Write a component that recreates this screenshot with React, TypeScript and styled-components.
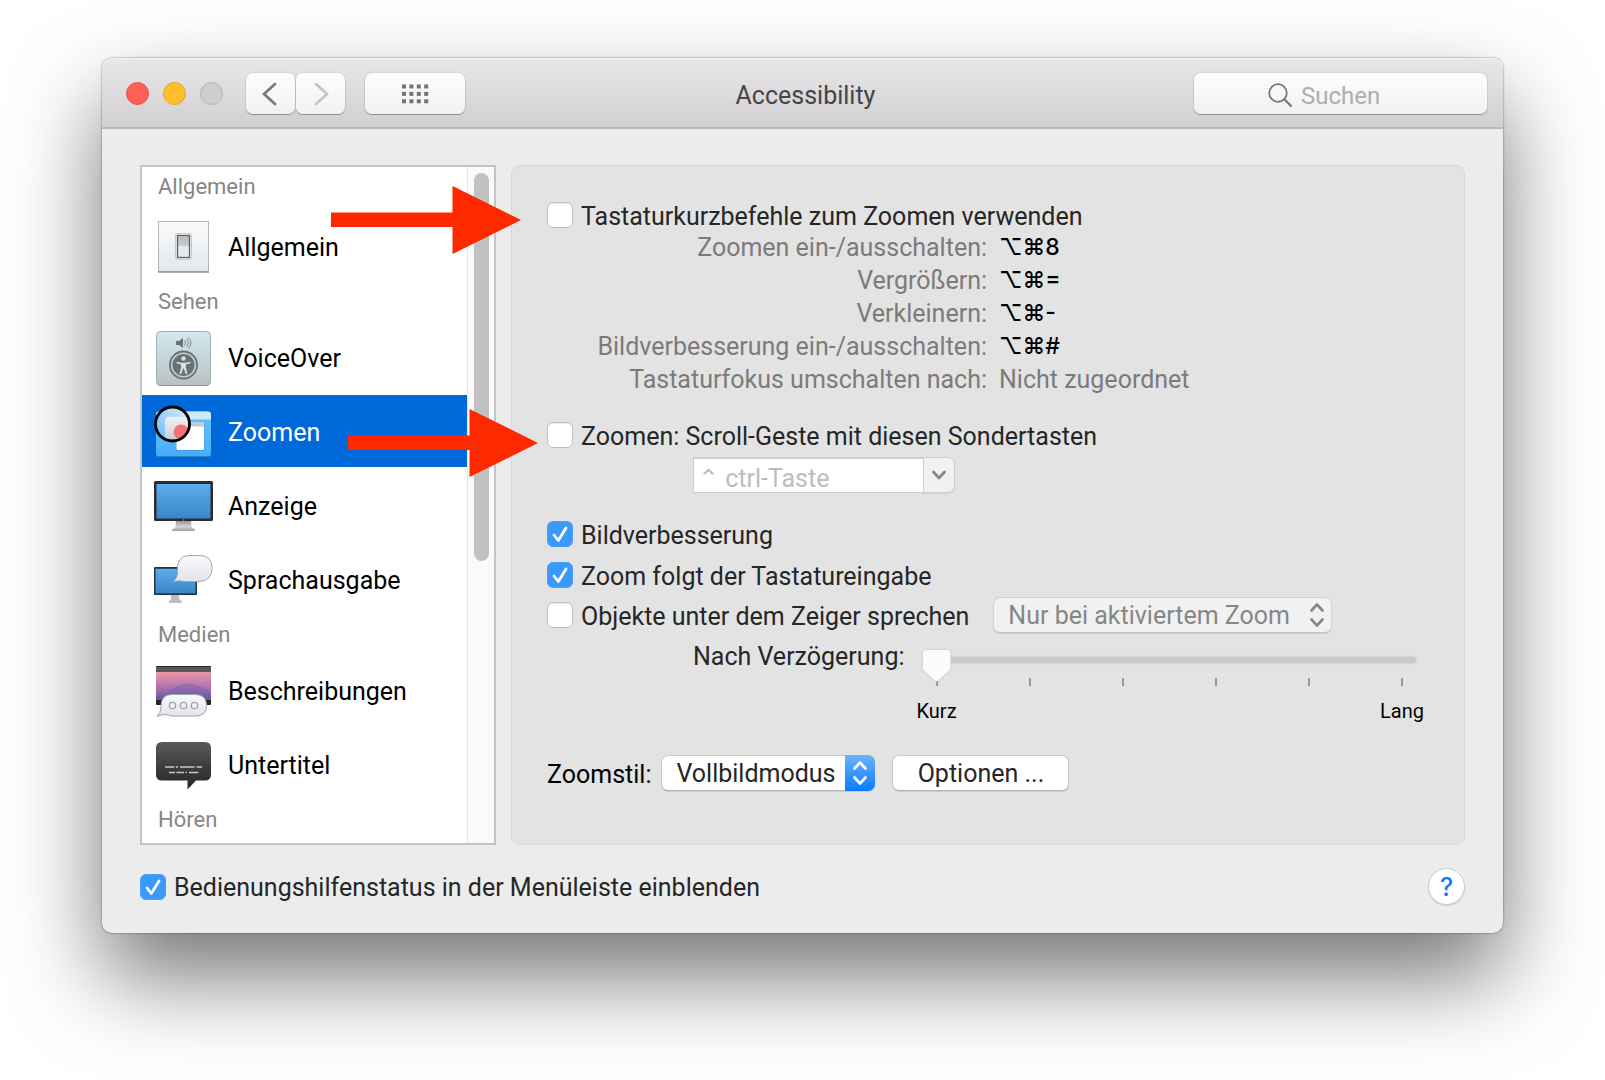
import React, { useState } from "react";
import styled, { createGlobalStyle, css } from "styled-components";

const GlobalStyle = createGlobalStyle`
  *, *::before, *::after { box-sizing: border-box; }
  body {
    margin: 0;
    background: #fff;
    color: #262626;
    font-family: Roboto, "Liberation Sans", sans-serif;
    font-size: 25px;
    line-height: 28px;
  }
  button, input, select { font: inherit; color: inherit; margin: 0; }
`;

const Desktop = styled.div`
  padding: 58px 102px 147px;
`;

const Window = styled.main`
  position: relative;
  border-radius: 10px;
  background: #ececec;
  box-shadow: 0 0 2px rgba(0, 0, 0, 0.6), 0 44px 90px rgba(0, 0, 0, 0.54);
`;

/* ---------- title bar ---------- */

const TitleBar = styled.header`
  display: grid;
  grid-template-columns: 1fr auto 1fr;
  align-items: center;
  height: 71px;
  padding: 2px 16px 0 24px;
  border-radius: 10px 10px 0 0;
  border-bottom: 2px solid #b9b7b9;
  background: linear-gradient(#e9e7ea, #d1cfd2);
  box-shadow: inset 0 1px #f5f4f5;
`;

const TitleGroup = styled.div`
  display: flex;
  align-items: center;
`;

const Lights = styled.div`
  display: flex;
  gap: 14px;
  margin-right: 23px;
`;

const Light = styled.button<{ $fill: string; $edge: string }>`
  width: 23px;
  height: 23px;
  padding: 0;
  border: 1px solid ${(p) => p.$edge};
  border-radius: 50%;
  background: ${(p) => p.$fill};
`;

const barControl = css`
  height: 41px;
  border: 0;
  border-radius: 7px;
  background: linear-gradient(#fdfdfd, #f1f1f1);
  box-shadow: 0 0 1px 1px rgba(0, 0, 0, 0.06), 0 1px 1px rgba(0, 0, 0, 0.3);
`;

const BarButton = styled.button<{ $wide?: boolean }>`
  ${barControl}
  display: grid;
  place-items: center;
  width: ${(p) => (p.$wide ? 100 : 49)}px;
  padding: 0;
`;

const NavButtons = styled.div`
  display: flex;
  gap: 1px;
  margin-right: 20px;
`;

const Title = styled.h1`
  margin: 0;
  padding: 4px 2px 0 0;
  font-size: 25px;
  font-weight: 400;
  color: #454446;
`;

const Search = styled.label`
  ${barControl}
  display: flex;
  align-items: center;
  justify-self: end;
  gap: 9px;
  width: 293px;
  padding: 2px 8px 0 74px;
`;

const SearchInput = styled.input`
  flex: 1;
  min-width: 0;
  padding: 2px 0 0;
  border: 0;
  outline: 0;
  background: none;
  font-size: 24px;
  &::placeholder { color: #adadad; opacity: 1; }
`;

/* ---------- body ---------- */

const Content = styled.div`
  display: flex;
  gap: 15px;
  padding: 36px 38px 0;
`;

const Sidebar = styled.nav`
  display: flex;
  flex: none;
  width: 356px;
  border: 2px solid #c4c4c4;
  background: #fff;
`;

const SidebarList = styled.div`
  flex: 1;
  padding-bottom: 4px;
`;

const Category = styled.h2<{ $first?: boolean }>`
  margin: 0;
  padding-left: 16px;
  height: ${(p) => (p.$first ? 43 : 37)}px;
  font-size: 22px;
  line-height: ${(p) => (p.$first ? 39 : 36)}px;
  font-weight: 400;
  color: #868686;
`;

const Item = styled.button<{ $selected?: boolean }>`
  display: flex;
  align-items: center;
  gap: 15px;
  width: 100%;
  height: 72px;
  margin-bottom: 2px;
  padding: 0 0 0 11px;
  border: 0;
  text-align: left;
  font-size: 25px;
  background: ${(p) => (p.$selected ? "#0069d9" : "transparent")};
  color: ${(p) => (p.$selected ? "#fff" : "#000")};
`;

const ItemName = styled.span`
  padding-top: 4px;
`;

const ScrollTrack = styled.div`
  width: 27px;
  padding: 6px 5px 0 6px;
  border-left: 1px solid #e6e6e6;
  background: #fafafa;
`;

const ScrollThumb = styled.div`
  width: 15px;
  height: 388px;
  border-radius: 8px;
  background: #c1c1c1;
`;

const Panel = styled.section`
  flex: 1;
  min-width: 0;
  padding: 36px 35px 52px;
  border: 1px solid #d9d9d9;
  border-radius: 8px;
  background: #e3e3e3;
`;

const CheckLabel = styled.label`
  display: flex;
  align-items: center;
  gap: 8px;
  height: 26px;
  white-space: nowrap;
`;

const CheckText = styled.span`
  padding-top: 3px;
`;

const CheckBoxWrap = styled.span`
  display: grid;
  width: 26px;
  height: 26px;
  & > * { grid-area: 1 / 1; }
  & > svg { pointer-events: none; visibility: hidden; }
  & > input:checked + svg { visibility: visible; }
`;

const CheckInput = styled.input`
  appearance: none;
  width: 26px;
  height: 26px;
  border: 1px solid #c0c0c0;
  border-radius: 6px;
  background: #fff;
  box-shadow: inset 0 1px 1px rgba(0, 0, 0, 0.08);
  &:checked {
    border-color: #4a9dfa;
    background: #3b99fc;
    box-shadow: none;
  }
`;

const Shortcuts = styled.dl`
  display: grid;
  grid-template-columns: 440px 1fr;
  column-gap: 12px;
  margin: 3px 0 26px;
  line-height: 33px;
`;

const ShortcutName = styled.dt`
  text-align: right;
  color: #7b7b7b;
`;

const ShortcutKeys = styled.dd<{ $unset?: boolean }>`
  margin: 0;
  color: ${(p) => (p.$unset ? "#7b7b7b" : "#000")};
  ${(p) => !p.$unset && css`font-family: Inter, "DejaVu Sans", sans-serif; font-size: 23px; font-weight: 500;`}
`;

const Combo = styled.div`
  display: flex;
  width: 262px;
  height: 36px;
  margin: 9px 0 28px 146px;
`;

const ComboInput = styled.input`
  flex: 1;
  min-width: 0;
  padding: 6px 4px 0;
  border: 1px solid #cfcfcf;
  border-top-width: 2px;
  border-right: 0;
  outline: 0;
  background: #fff;
  &:disabled { color: #bdbdbd; }
`;

const ComboButton = styled.button`
  display: grid;
  place-items: center;
  width: 32px;
  padding: 0;
  border: 1px solid #cfcfcf;
  border-radius: 0 7px 7px 0;
  background: #f1f1f1;
  box-shadow: 0 1px 1px rgba(0, 0, 0, 0.08);
`;

const CheckStack = styled.div`
  display: flex;
  flex-direction: column;
  gap: 15px;
`;

const SpeakRow = styled.div`
  display: flex;
  align-items: center;
  gap: 24px;
  margin: 9px 0 10px;
`;

const SelectWrap = styled.span<{ $width: number }>`
  display: grid;
  grid-template-columns: 1fr 30px;
  width: ${(p) => p.$width}px;
  height: 36px;
  border-radius: 7px;
  & > select { grid-area: 1 / 1 / 2 / 3; }
  & > span { grid-area: 1 / 2; pointer-events: none; }
`;

const Select = styled.select`
  appearance: none;
  min-width: 0;
  padding: 2px 0 0 14px;
  border: 1px solid #c9c9c9;
  border-bottom-color: #b4b4b4;
  border-radius: 7px;
  background: #fff;
  color: #262626;
  box-shadow: 0 1px 1px rgba(0, 0, 0, 0.1);
  &:disabled {
    border-color: #d2d2d2;
    border-bottom-color: #c4c4c4;
    background: #f1f1f1;
    color: #868686;
    opacity: 1;
  }
`;

const SelectArrows = styled.span<{ $active?: boolean }>`
  display: grid;
  place-items: center;
  border-radius: 0 7px 7px 0;
  color: ${(p) => (p.$active ? "#fff" : "#868686")};
  background: ${(p) => (p.$active ? "linear-gradient(#6cb3fa, #0a7bff)" : "none")};
`;

const DelayRow = styled.div`
  display: flex;
  gap: 12px;
  padding: 0 5px 32px 146px;
`;

const DelayLabel = styled.label`
  white-space: nowrap;
`;

const SliderBox = styled.div`
  flex: 1;
  min-width: 0;
  color: #000;
`;

const Slider = styled.input`
  appearance: none;
  display: block;
  width: calc(100% - 14px);
  height: 6px;
  margin: 14px 8px 0 6px;
  border-radius: 3px;
  outline: 0;
  background: #cacaca;
  filter: drop-shadow(0 0 1px rgba(0, 0, 0, 0.18));
  &::-webkit-slider-runnable-track { height: 6px; }
  &::-webkit-slider-thumb {
    appearance: none;
    width: 28px;
    height: 32px;
    margin-top: -7px;
    background: #fbfbfb;
    clip-path: path("M4 0H24Q28 0 28 4V17Q28 19 26 21L15 31Q14 32 13 31L2 21Q0 19 0 17V4Q0 0 4 0Z");
  }
`;

const Ticks = styled.div`
  display: flex;
  justify-content: space-between;
  padding: 15px 21px 0 19px;
`;

const Tick = styled.span`
  width: 2px;
  height: 8px;
  background: #999;
`;

const SliderLabels = styled.div`
  display: flex;
  justify-content: space-between;
  margin-top: 13px;
  font-size: 20px;
  line-height: 24px;
`;

const StyleRow = styled.div`
  display: flex;
  align-items: center;
  color: #000;
`;

const StyleLabel = styled.label`
  margin-right: 10px;
  padding-top: 3px;
`;

const OptionsButton = styled.button`
  width: 177px;
  height: 36px;
  margin-left: 17px;
  padding: 2px 0 0;
  border: 1px solid #c9c9c9;
  border-bottom-color: #b4b4b4;
  border-radius: 7px;
  background: #fff;
  color: #262626;
  box-shadow: 0 1px 1px rgba(0, 0, 0, 0.1);
`;

const Footer = styled.footer`
  display: flex;
  align-items: center;
  justify-content: space-between;
  padding: 23px 38px 28px;
`;

const HelpButton = styled.button`
  width: 37px;
  height: 37px;
  padding: 0;
  border: 1px solid #cdcdcd;
  border-radius: 50%;
  background: #fff;
  color: #0a7bff;
  font-family: Inter, sans-serif;
  font-size: 25px;
  font-weight: 500;
  line-height: 36px;
  box-shadow: 0 1px 1px rgba(0, 0, 0, 0.15);
`;

/* Annotation arrows float over the window */
const Arrow = styled.svg<{ $x: number; $y: number }>`
  position: absolute;
  left: ${(p) => p.$x}px;
  top: ${(p) => p.$y}px;
  pointer-events: none;
`;

/* ---------- icons ---------- */

const Icon = ({ children }: { children: React.ReactNode }) => (
  <svg width="60" height="60" viewBox="0 0 60 60" aria-hidden="true">{children}</svg>
);

const SwitchIcon = () => (
  <Icon>
    <defs>
      <linearGradient id="plate" x2="0" y2="1"><stop stopColor="#fafbfc" /><stop offset="1" stopColor="#e3e7eb" /></linearGradient>
      <linearGradient id="rocker" x2="0" y2="1"><stop stopColor="#d9dbde" /><stop offset=".1" stopColor="#b9bcc0" /><stop offset=".45" stopColor="#c8cbce" /><stop offset=".5" stopColor="#e4e7ea" /><stop offset="1" stopColor="#e6ecf0" /></linearGradient>
    </defs>
    <rect x="5.500" y="5.500" width="50" height="50" fill="url(#plate)" stroke="#b4b7ba" />
    <path d="M5 56h51" stroke="#8f9396" strokeWidth="1.500" />
    <rect x="22.500" y="17.500" width="16" height="26" rx="2" fill="#f4f4f4" stroke="#c6c8ca" />
    <rect x="24.500" y="19.500" width="12" height="22" fill="url(#rocker)" stroke="#5c5f61" strokeWidth="1.300" />
  </Icon>
);

const VoiceOverIcon = () => (
  <Icon>
    <defs>
      <linearGradient id="vo" x2="0" y2="1"><stop stopColor="#d3e8ef" /><stop offset="1" stopColor="#b8c1c2" /></linearGradient>
    </defs>
    <rect x="3.500" y="4.500" width="54" height="54" rx="4" fill="url(#vo)" stroke="#9fb0b5" />
    <path d="M6 58.500h49" stroke="#8b9799" />
    <path d="M23 14h3l4-3v10l-4-3h-3z" fill="#687376" />
    <path d="M31.500 13.500q2 2.500 0 5M33.500 12q3.500 4 0 8M35.500 10.500q5 5.500 0 11" fill="none" stroke="#7b888b" />
    <circle cx="30.500" cy="38" r="13.500" fill="#c4d1d4" stroke="#687275" strokeWidth="1.800" />
    <circle cx="30.500" cy="38" r="11" fill="#687275" />
    <circle cx="30.500" cy="31.500" r="2.200" fill="#d7e2e5" />
    <path d="M23.500 34.700l5 1h4l5-1v1.600l-4.600 1.200v3l1.600 6.500h-1.800l-1.800-5.500h-.8l-1.800 5.500h-1.800l1.600-6.500v-3l-4.600-1.200z" fill="#d7e2e5" />
  </Icon>
);

const ZoomIcon = () => (
  <Icon>
    <defs>
      <linearGradient id="zw" x2="0" y2="1"><stop stopColor="#6cc0fb" /><stop offset="1" stopColor="#46aefb" /></linearGradient>
      <linearGradient id="zl" x1="0" y1="1" x2="1" y2="0"><stop stopColor="#5db8fa" /><stop offset="1" stopColor="#dff1fd" /></linearGradient>
      <linearGradient id="zp" x2="0" y2="1"><stop stopColor="#f1f1f1" /><stop offset="1" stopColor="#cccfd2" /></linearGradient>
      <clipPath id="lens"><circle cx="19.500" cy="23" r="16.500" /></clipPath>
    </defs>
    <rect x="3" y="10.500" width="55" height="45" rx="3" fill="url(#zw)" />
    <path d="M3 18.500v-5q0-3 3-3h49q3 0 3 3v5z" fill="#cdeafd" />
    <path d="M4.500 55.500h52" stroke="#2a82cf" />
    <rect x="23" y="22" width="28.500" height="28" rx="1.500" fill="#2f88ca" opacity=".5" />
    <rect x="23.500" y="21.500" width="27.500" height="27.500" rx="1" fill="#fff" />
    <path d="M23.500 21.500h27.500v4h-27.500z" fill="#c5cacd" />
    <g clipPath="url(#lens)">
      <path d="M2 6h35v35h-35z" fill="url(#zl)" />
      <rect x="12" y="16" width="28" height="22" rx="4" fill="url(#zp)" />
      <circle cx="28" cy="31" r="7.500" fill="#fb7070" />
    </g>
    <circle cx="19.500" cy="23" r="17" fill="none" stroke="#000" strokeWidth="2.800" />
  </Icon>
);

const DisplayIcon = () => (
  <Icon>
    <defs>
      <linearGradient id="scr" x2="0" y2="1"><stop stopColor="#5cacee" /><stop offset="1" stopColor="#3a85c6" /></linearGradient>
      <linearGradient id="stand" x2="0" y2="1"><stop stopColor="#8e8e8e" /><stop offset=".6" stopColor="#d4d4d4" /><stop offset="1" stopColor="#a0a0a0" /></linearGradient>
    </defs>
    <path d="M23 45h15l.5 7 3.500 2.500v1.500h-23v-1.500l3.500-2.500z" fill="url(#stand)" />
    <rect x="1" y="6" width="59" height="40" rx="1.500" fill="#2b2c2e" />
    <rect x="3.500" y="9" width="54" height="34.500" fill="url(#scr)" />
    <circle cx="30.500" cy="45" r=".8" fill="#999" />
  </Icon>
);

const SpeechIcon = () => (
  <Icon>
    <defs>
      <linearGradient id="bub" x2="0" y2="1"><stop stopColor="#fafafc" /><stop offset="1" stopColor="#e2e4ea" /></linearGradient>
    </defs>
    <path d="M18 45h8l.3 5 2.700 2.500v1.500h-13v-1.500l2-2.500z" fill="#bdbdbd" />
    <rect x="1" y="18" width="43" height="28" rx="1" fill="#26333f" />
    <rect x="2.500" y="19.800" width="40" height="24.500" fill="url(#scr)" />
    <path d="M36 6.500h11q12 0 12 12.500t-12 13.500h-15q-5-1.500-12 0 4.500-3 4.500-8 -2-18 11.500-18z" fill="url(#bub)" stroke="#a3a9b1" />
  </Icon>
);

const DescriptionsIcon = () => (
  <Icon>
    <defs>
      <linearGradient id="sky" x2="0" y2="1"><stop stopColor="#ed98a8" /><stop offset=".5" stopColor="#b477ac" /><stop offset="1" stopColor="#5f55a5" /></linearGradient>
    </defs>
    <rect x="3" y="6" width="55" height="39" rx="1" fill="#242628" />
    <path d="M3 7h55v5h-55z" fill="#56595a" />
    <path d="M3 12h55v28h-55z" fill="url(#sky)" />
    <path d="M14 34q16-20 44-2v8h-44z" fill="#7160ae" opacity=".4" />
    <path d="M19 34.500h23q11.500 0 11.500 11t-11.500 10.500h-24q-5-3-14 .3 4-3 4-9.800 0-12 11-12z" fill="url(#bub)" stroke="#9ba1a9" />
    <g fill="none" stroke="#a1a6ab" strokeWidth="1.300"><circle cx="19.500" cy="45.500" r="3.200" /><circle cx="30.500" cy="45.500" r="3.200" /><circle cx="41.500" cy="45.500" r="3.200" /></g>
  </Icon>
);

const SubtitleIcon = () => (
  <Icon>
    <defs>
      <linearGradient id="dark" x2="0" y2="1"><stop stopColor="#595959" /><stop offset="1" stopColor="#242424" /></linearGradient>
    </defs>
    <path d="M9 8h43q6 0 6 6v26.500q0 6-6 6h-9l-8.500 9v-9H9q-6 0-6-6V14q0-6 6-6z" fill="url(#dark)" />
    <path d="M12 33h9.500m1.500 0h2m2 0h14.500m2 0h5.500M16 38.500h6m1.500 0h7.500m1.500 0h1.500m2 0h9.500" stroke="#c6c6c6" strokeWidth="1.600" />
  </Icon>
);

const UpDown = () => (
  <svg width="16" height="28" viewBox="0 0 16 28" fill="none" stroke="currentColor" strokeWidth="2.600" strokeLinecap="round" strokeLinejoin="round" aria-hidden="true">
    <path d="M2.500 9.500L8 3.500l5.500 6M2.500 18.500L8 24.500l5.500-6" />
  </svg>
);

const RedArrow = ({ x, y }: { x: number; y: number }) => (
  <Arrow $x={x} $y={y} width="190" height="70" viewBox="0 0 190 70" aria-hidden="true">
    <path d="M0 27.500h121.500V1L190 35 121.500 69V42H0z" fill="#ff2900" />
  </Arrow>
);

/* ---------- parts ---------- */

function CheckBox({ label, initial = false }: { label: string; initial?: boolean }) {
  const [on, setOn] = useState(initial);
  return (
    <CheckLabel>
      <CheckBoxWrap>
        <CheckInput type="checkbox" checked={on} onChange={(e) => setOn(e.target.checked)} />
        <svg width="26" height="26" viewBox="0 0 26 26" fill="none" aria-hidden="true">
          <path d="M7 14l4.300 5.500L19 7" stroke="#fff" strokeWidth="2.800" strokeLinecap="round" strokeLinejoin="round" />
        </svg>
      </CheckBoxWrap>
      <CheckText>{label}</CheckText>
    </CheckLabel>
  );
}

const sections = [
  { title: "Allgemein", items: [{ name: "Allgemein", icon: <SwitchIcon /> }] },
  {
    title: "Sehen",
    items: [
      { name: "VoiceOver", icon: <VoiceOverIcon /> },
      { name: "Zoomen", icon: <ZoomIcon /> },
      { name: "Anzeige", icon: <DisplayIcon /> },
      { name: "Sprachausgabe", icon: <SpeechIcon /> },
    ],
  },
  {
    title: "Medien",
    items: [
      { name: "Beschreibungen", icon: <DescriptionsIcon /> },
      { name: "Untertitel", icon: <SubtitleIcon /> },
    ],
  },
  { title: "Hören", items: [] },
];

const shortcuts = [
  ["Zoomen ein-/ausschalten:", "⌥⌘8"],
  ["Vergrößern:", "⌥⌘="],
  ["Verkleinern:", "⌥⌘-"],
  ["Bildverbesserung ein-/ausschalten:", "⌥⌘#"],
  ["Tastaturfokus umschalten nach:", "Nicht zugeordnet"],
];

export default function App() {
  const [delay, setDelay] = useState(0);
  return (
    <>
      <GlobalStyle />
      <Desktop>
        <Window>
          <TitleBar>
            <TitleGroup>
              <Lights>
                <Light $fill="#ff5f57" $edge="#e8504b" aria-label="Schließen" />
                <Light $fill="#ffbe2e" $edge="#e5a52a" aria-label="Minimieren" />
                <Light $fill="#cfcdcf" $edge="#b5b3b5" aria-label="Vergrößern" />
              </Lights>
              <NavButtons>
                <BarButton aria-label="Zurück">
                  <svg width="18" height="24" viewBox="0 0 18 24" fill="none" stroke="#7a7a7a" strokeWidth="2.800" strokeLinecap="round">
                    <path d="M13 2L2 12l11 10" />
                  </svg>
                </BarButton>
                <BarButton aria-label="Vorwärts">
                  <svg width="16" height="24" viewBox="0 0 16 24" fill="none" stroke="#c4c4c4" strokeWidth="2.600" strokeLinecap="round">
                    <path d="M3 2l11 10L3 22" />
                  </svg>
                </BarButton>
              </NavButtons>
              <BarButton $wide aria-label="Alle einblenden">
                <svg width="28" height="20" viewBox="0 0 28 20" fill="#737373">
                  {[0, 1, 2].flatMap((r) => [0, 1, 2, 3].map((c) => (
                    <rect key={`${r}${c}`} x={1 + c * 7.4} y={r * 7.4 + 0.5} width="4" height="4" />
                  )))}
                </svg>
              </BarButton>
            </TitleGroup>
            <Title>Accessibility</Title>
            <Search>
              <svg width="24" height="24" viewBox="0 0 24 24" fill="none" stroke="#777" strokeWidth="1.800" strokeLinecap="round" aria-hidden="true">
                <circle cx="10" cy="10" r="8.800" />
                <path d="M16.500 16.500l6.500 6.500" strokeWidth="2.200" />
              </svg>
              <SearchInput type="text" placeholder="Suchen" aria-label="Suchen" />
            </Search>
          </TitleBar>

          <Content>
            <Sidebar>
              <SidebarList>
                {sections.map((s, i) => (
                  <React.Fragment key={s.title}>
                    <Category $first={i === 0}>{s.title}</Category>
                    {s.items.map((it) => (
                      <Item key={it.name} $selected={it.name === "Zoomen"}>
                        {it.icon}
                        <ItemName>{it.name}</ItemName>
                      </Item>
                    ))}
                  </React.Fragment>
                ))}
              </SidebarList>
              <ScrollTrack>
                <ScrollThumb />
              </ScrollTrack>
            </Sidebar>

            <Panel>
              <CheckBox label="Tastaturkurzbefehle zum Zoomen verwenden" />
              <Shortcuts>
                {shortcuts.map(([name, keys]) => (
                  <React.Fragment key={name}>
                    <ShortcutName>{name}</ShortcutName>
                    <ShortcutKeys $unset={keys.length > 3}>{keys}</ShortcutKeys>
                  </React.Fragment>
                ))}
              </Shortcuts>

              <CheckBox label="Zoomen: Scroll-Geste mit diesen Sondertasten" />
              <Combo>
                <ComboInput type="text" disabled defaultValue="⌃ ctrl-Taste" aria-label="Sondertaste" />
                <ComboButton disabled aria-label="Sondertaste auswählen">
                  <svg width="16" height="10" viewBox="0 0 16 10" fill="none" stroke="#868686" strokeWidth="2.800" strokeLinecap="round" strokeLinejoin="round">
                    <path d="M2.500 2L8 8l5.500-6" />
                  </svg>
                </ComboButton>
              </Combo>

              <CheckStack>
                <CheckBox label="Bildverbesserung" initial />
                <CheckBox label="Zoom folgt der Tastatureingabe" initial />
              </CheckStack>
              <SpeakRow>
                <CheckBox label="Objekte unter dem Zeiger sprechen" />
                <SelectWrap $width={339}>
                  <Select disabled aria-label="Objekte sprechen">
                    <option>Nur bei aktiviertem Zoom</option>
                  </Select>
                  <SelectArrows><UpDown /></SelectArrows>
                </SelectWrap>
              </SpeakRow>

              <DelayRow>
                <DelayLabel htmlFor="delay">Nach Verzögerung:</DelayLabel>
                <SliderBox>
                  <Slider id="delay" type="range" min={0} max={5} value={delay} onChange={(e) => setDelay(Number(e.target.value))} />
                  <Ticks>
                    {[0, 1, 2, 3, 4, 5].map((n) => <Tick key={n} />)}
                  </Ticks>
                  <SliderLabels>
                    <span>Kurz</span>
                    <span>Lang</span>
                  </SliderLabels>
                </SliderBox>
              </DelayRow>

              <StyleRow>
                <StyleLabel htmlFor="zoom-style">Zoomstil:</StyleLabel>
                <SelectWrap $width={214}>
                  <Select id="zoom-style">
                    <option>Vollbildmodus</option>
                    <option>Bild-in-Bild</option>
                  </Select>
                  <SelectArrows $active><UpDown /></SelectArrows>
                </SelectWrap>
                <OptionsButton>Optionen ...</OptionsButton>
              </StyleRow>
            </Panel>
          </Content>

          <Footer>
            <CheckBox label="Bedienungshilfenstatus in der Menüleiste einblenden" initial />
            <HelpButton aria-label="Hilfe">?</HelpButton>
          </Footer>

          <RedArrow x={229} y={127} />
          <RedArrow x={246} y={350} />
        </Window>
      </Desktop>
    </>
  );
}
